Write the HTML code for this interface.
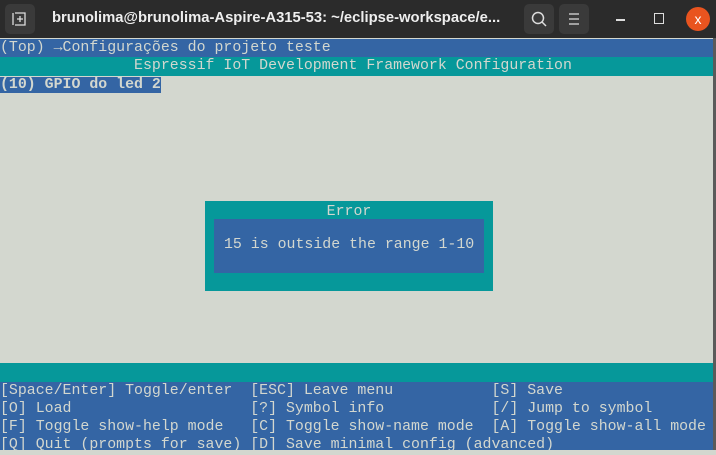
<!DOCTYPE html><html><head><style>
body{margin:0;width:716px;height:450px;overflow:hidden;background:#d3d7cf;font-family:"Liberation Mono",monospace;font-size:14.9px;position:relative}
.t{position:absolute;left:0;top:0;width:716px;height:38px;background:#2b2b2b;color:#fff;font-family:"Liberation Sans",sans-serif}
.r{position:absolute;left:0;width:713px;height:19px;line-height:19px;white-space:pre;color:#d3d7cf}
.b{background:#3465a4}.g{background:#06989a}
.btn{position:absolute;top:4px;width:30px;height:30px;border-radius:5px;background:#3a3a3a}
</style></head><body>
<div class="t">
<div class="btn" style="left:5px"></div>
<svg style="position:absolute;left:11px;top:11px" width="16" height="16" fill="none" stroke="#ddd" stroke-width="1.3"><path d="M4 2h10v12H4M2 2v12M9 5v6M6 8h6"/></svg>
<div style="position:absolute;left:52px;top:10px;font-size:14.8px;font-weight:bold;color:#eee">brunolima@brunolima-Aspire-A315-53: ~/eclipse-workspace/e...</div>
<div class="btn" style="left:524px"></div><div class="btn" style="left:559px"></div>
<svg style="position:absolute;left:530px;top:10px" width="18" height="18" fill="none" stroke="#ddd" stroke-width="1.5"><circle cx="8" cy="8" r="5.5"/><path d="M12 12l4 4"/></svg>
<svg style="position:absolute;left:566px;top:12px" width="16" height="14" stroke="#ddd" stroke-width="1.3"><path d="M3 2h10M3 7h10M3 12h10"/></svg>
<div style="position:absolute;left:616px;top:19px;width:9px;height:1.5px;background:#ddd"></div>
<div style="position:absolute;left:654px;top:13px;width:8px;height:9px;border:1.5px solid #ddd"></div>
<div style="position:absolute;left:686px;top:7px;width:24px;height:24px;border-radius:50%;background:#e9541f;color:#fff;text-align:center;line-height:24px;font-size:14px">x</div>
</div>
<div style="position:absolute;left:713px;top:38px;width:3px;height:412px;background:#5a5a5a"></div>
<div class="r b" style="top:39px">(Top) →Configurações do projeto teste</div>
<div class="r g" style="top:57px">               Espressif IoT Development Framework Configuration</div>
<div class="r" style="top:76px"><span class="b" style="font-weight:bold">(10) GPIO do led 2</span></div>
<div style="position:absolute;left:205px;top:201px;width:288px;height:90px;background:#06989a"></div>
<div style="position:absolute;left:205px;top:203px;width:288px;text-align:center;color:#d3d7cf;line-height:18px">Error</div>
<div style="position:absolute;left:214px;top:219px;width:270px;height:54px;background:#3465a4"></div>
<div style="position:absolute;left:224px;top:236px;color:#d3d7cf;white-space:pre;line-height:19px">15 is outside the range 1-10</div>
<div class="r g" style="top:363px;height:19px"></div>
<div class="r b" style="top:382px;height:68px"></div>
<div class="r" style="top:382px">[Space/Enter] Toggle/enter  [ESC] Leave menu           [S] Save</div>
<div class="r" style="top:400px">[O] Load                    [?] Symbol info            [/] Jump to symbol</div>
<div class="r" style="top:418px">[F] Toggle show-help mode   [C] Toggle show-name mode  [A] Toggle show-all mode</div>
<div class="r" style="top:436px">[Q] Quit (prompts for save) [D] Save minimal config (advanced)</div>
</body></html>
